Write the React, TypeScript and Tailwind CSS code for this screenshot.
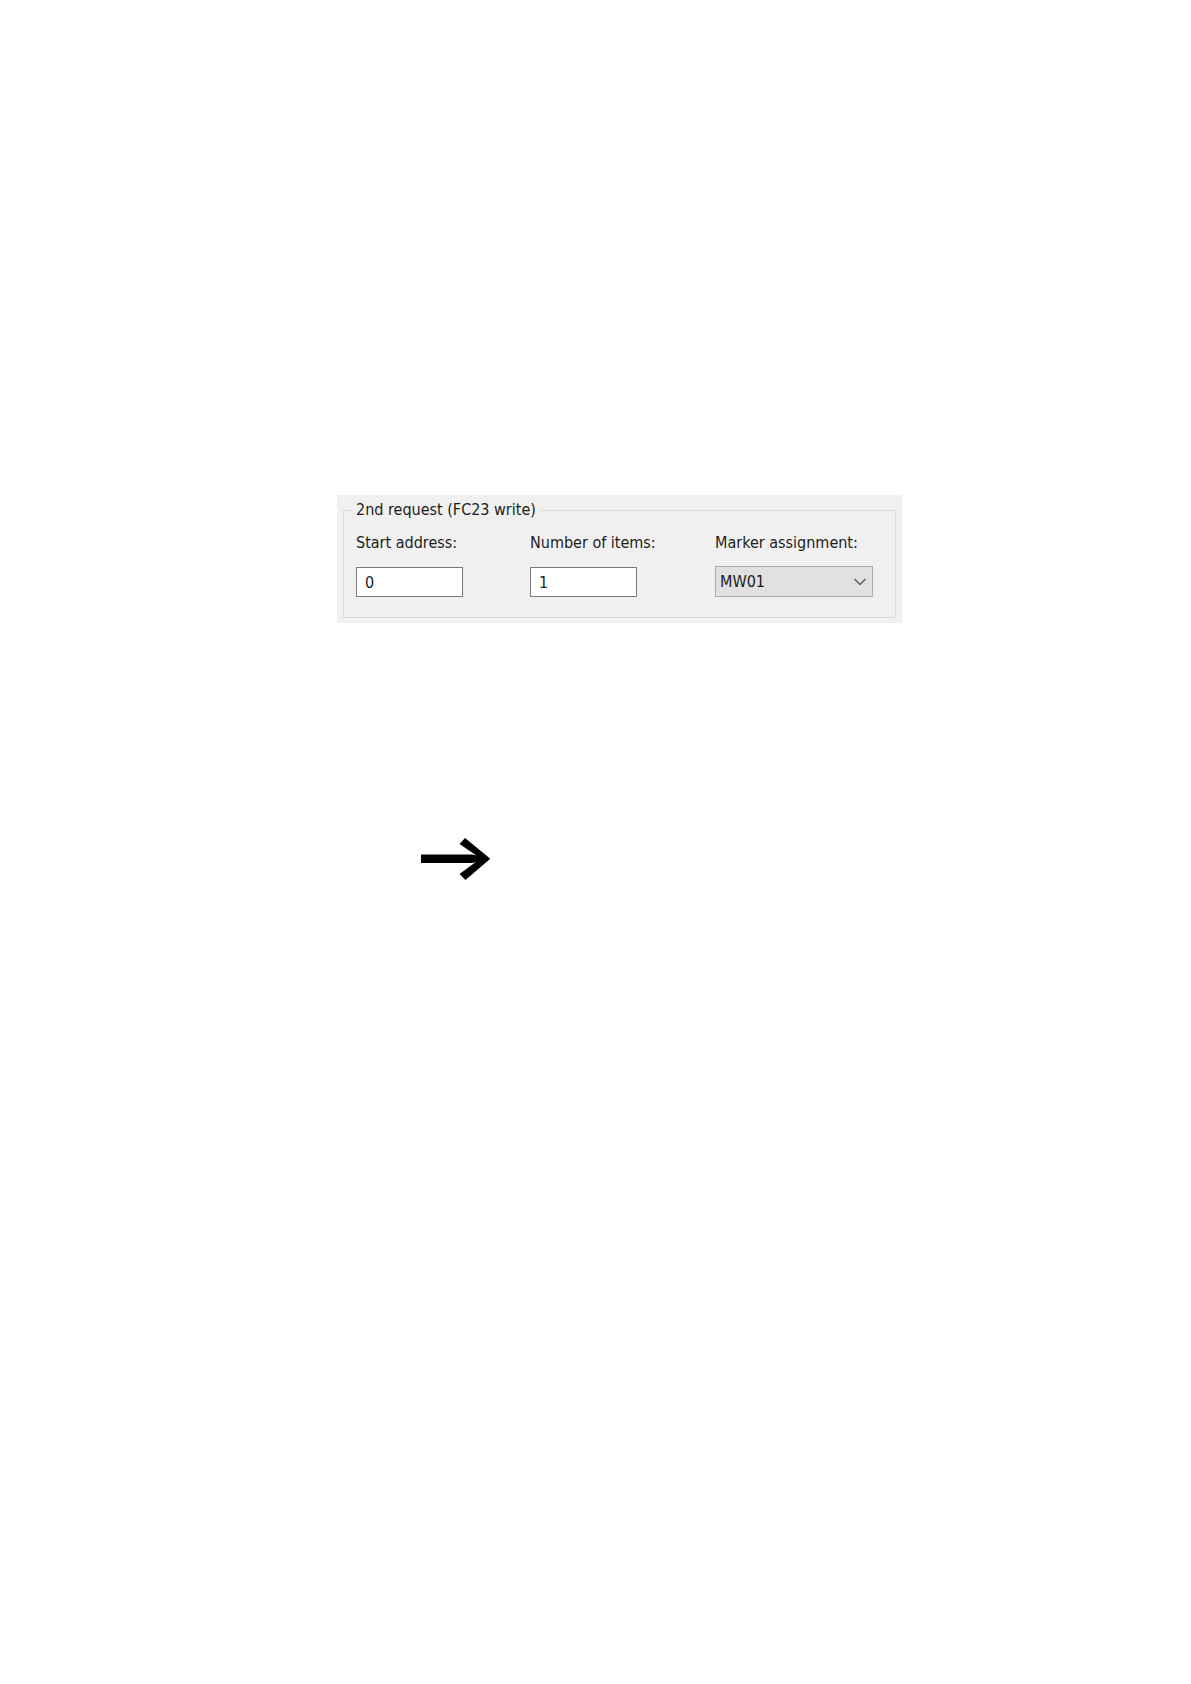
import { useState } from 'react'

const markers = ['MW01', 'MW02', 'MW03', 'MW04']

function NumberField({
  id,
  label,
  value,
  onChange,
}: {
  id: string
  label: string
  value: string
  onChange: (value: string) => void
}) {
  return (
    <div className="flex flex-col items-start justify-between">
      <label htmlFor={id}>{label}</label>
      <input
        id={id}
        type="text"
        inputMode="numeric"
        className="h-[30px] w-[107px] border border-[#7a7a7a] bg-white px-2 outline-none"
        value={value}
        onChange={(e) => onChange(e.target.value)}
      />
    </div>
  )
}

export default function App() {
  const [address, setAddress] = useState('0')
  const [items, setItems] = useState('1')
  const [marker, setMarker] = useState('MW01')

  return (
    <main className="min-h-screen bg-white pt-[495px] pr-[289px] pl-[337px]">
      <form className="bg-[#f0f0f0] px-1.5 pt-[5px] pb-[5px] font-['DejaVu_Sans_Condensed','DejaVu_Sans',sans-serif] text-base leading-5 text-[#1c1c1c]">
        <fieldset className="border border-[#dcdcdc] px-3 pt-[13px] pb-5">
          <legend className="-ml-1 px-1">2nd request (FC23 write)</legend>
          <div className="grid h-16 grid-cols-[174fr_185fr_168fr]">
            <NumberField id="address" label="Start address:" value={address} onChange={setAddress} />
            <NumberField id="items" label="Number of items:" value={items} onChange={setItems} />
            <div className="flex flex-col items-start justify-between">
              <label htmlFor="marker">Marker assignment:</label>
              <div className="relative">
                <select
                  id="marker"
                  className="h-[31px] w-[158px] appearance-none border border-[#adadad] bg-[#e1e1e1] pr-8 pl-1 outline-none"
                  value={marker}
                  onChange={(e) => setMarker(e.target.value)}
                >
                  {markers.map((m) => (
                    <option key={m}>{m}</option>
                  ))}
                </select>
                <svg
                  className="pointer-events-none absolute top-3 right-1.5 h-2 w-3.5"
                  viewBox="0 0 14 8"
                  fill="none"
                  stroke="#606060"
                  strokeWidth="1.5"
                  aria-hidden="true"
                >
                  <path d="M1.500 1l5.500 5.500 5.500-5.500" />
                </svg>
              </div>
            </div>
          </div>
        </fieldset>
      </form>

      {/* Note arrow */}
      <svg className="mt-[215px] ml-[84px] h-[42px] w-[70px]" viewBox="0 0 70 42" aria-hidden="true">
        <path
          d="M0 16.500H50Q53 16.500 55.500 17.500L38.500 6L44 0L69 20.500V21L44.500 42L38.500 36L55.500 23.500Q53 25 50 25H0Z"
          fill="#000"
        />
      </svg>
    </main>
  )
}
